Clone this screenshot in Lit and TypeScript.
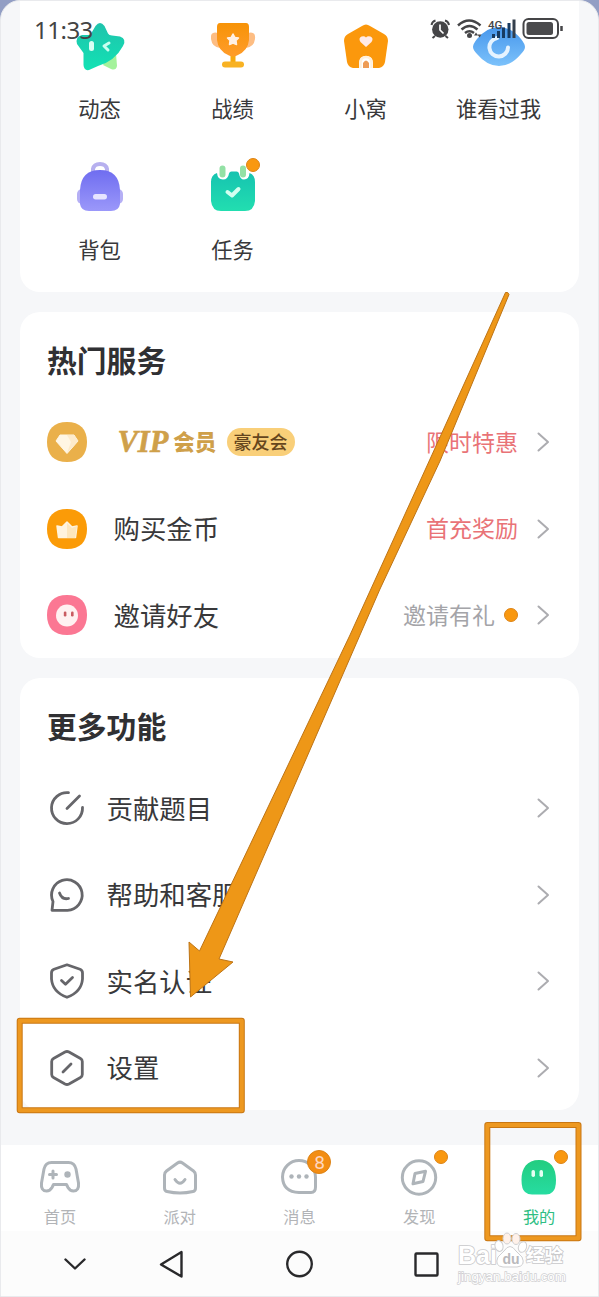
import { LitElement, html, css, svg } from "lit";
import { customElement } from "lit/decorators.js";

const star = html`<svg width="60" height="60" viewBox="0 0 60 60"><defs><linearGradient id="g" x1="0" y1="0" x2="0" y2="1"><stop offset="0" stop-color="#1fc3ac"/><stop offset="1" stop-color="#12e2b4"/></linearGradient></defs>
<path d="M38 38 L46 36 L47 49 Q46 54 41 52 L33 48Z" fill="#a4f29b"/>
<path d="M25.500 9 Q30 3 34.500 9 L38 16.500 Q39 18.500 42 18.500 L50 19.500 Q57 22 53 29 Q45 44 28 49 L19 53 Q14 54 13.500 48 L13.500 36 L7 27 Q5 20 12 18 L18 18 Q21 18 22 15Z" fill="url(#g)"/>
<rect x="19" y="24" width="5" height="10" rx="2.500" fill="#d8fff4"/><path d="M39 26 L34 29 L38 33" fill="none" stroke="#c8fff0" stroke-width="3" stroke-linecap="round" stroke-linejoin="round"/></svg>`;
const trophy = html`<svg width="60" height="60" viewBox="0 0 60 60"><defs><linearGradient id="g" x1="0" y1="0" x2="0" y2="1"><stop offset="0" stop-color="#f79307"/><stop offset="1" stop-color="#ff9c2a"/></linearGradient></defs>
<path d="M15 16 Q7 14 8 22 Q9 30 17 31Z M45 16 Q53 14 52 22 Q51 30 43 31Z" fill="#fdbd83"/>
<path d="M30 38 L30 48" stroke="#f7a90f" stroke-width="5"/><rect x="19" y="44.500" width="22" height="6" rx="3" fill="#f8b223"/>
<path d="M17 6 H43 Q46 6 46 10 V23 Q45 34 34 38.500 Q30 40.500 26 38.500 Q15 34 14 23 V10 Q14 6 17 6Z" fill="url(#g)"/>
<path d="M30 17 L32 20.500 L35.500 21 L33 23.500 L33.500 27.500 L30 26 L26.500 27.500 L27 23.500 L24.500 21 L28 20.500Z" fill="#fff0e4" stroke="#fff0e4" stroke-width="1.500" stroke-linejoin="round"/></svg>`;
const house = html`<svg width="60" height="60" viewBox="0 0 60 60">
<path d="M26 9 Q30 6 34 9 L48 17 Q52 19 52 24 L49 45 Q48 50 43 51 H37 V46 Q37 39 30 39 Q23 39 23 46 V51 H17 Q12 50 11 45 L8 24 Q8 19 12 17Z" fill="#fb980c"/>
<path d="M30 30 L24.500 25 Q22 21 25.500 19.500 Q28.500 18.500 30 20.500 Q31.500 18.500 34.500 19.500 Q38 21 35.500 25Z" fill="#ffeae8"/>
<path d="M24.500 51 V45.500 Q25 40 30 40 Q35 40 35.500 45.500 V51" fill="none" stroke="#fff0dc" stroke-width="2.500"/><path d="M27 51 V46 Q30 41 33 46 V51Z" fill="#ee9c55"/></svg>`;
const eye = html`<svg width="60" height="60" viewBox="0 0 60 60"><defs><linearGradient id="g" x1="0" y1="0" x2="0" y2="1"><stop offset="0" stop-color="#4797ec"/><stop offset="1" stop-color="#7cc2fb"/></linearGradient></defs>
<path d="M4 30 Q4 27 8 22 Q18 10 30 10 Q42 10 52 22 Q56 27 56 30 Q56 33 52 37 Q42 49 30 49 Q18 49 8 37 Q4 33 4 30Z" fill="url(#g)"/>
<path d="M28 21 A9.300 9.300 0 1 0 39 30.500" fill="none" stroke="#e5f3ff" stroke-width="4" stroke-linecap="round"/></svg>`;
const bag = html`<svg width="60" height="60" viewBox="0 0 60 60"><defs><linearGradient id="g" x1="0" y1="0" x2="0" y2="1"><stop offset="0" stop-color="#6f6df0"/><stop offset="1" stop-color="#9b98fa"/></linearGradient></defs>
<path d="M23 15 V11 Q24 6 30 6 Q36 6 37 11 V15" fill="none" stroke="#b7b0ef" stroke-width="4"/><rect x="7" y="31" width="46" height="15" rx="5" fill="#b5aff5"/>
<path d="M10 32 Q11 12 30 12 Q49 12 50 32 V46 Q49 53 41 53 H19 Q11 53 10 46Z" fill="url(#g)"/><rect x="23" y="36" width="14" height="5.500" rx="2.700" fill="#e6e4ff"/></svg>`;
const task = html`<svg width="60" height="60" viewBox="0 0 60 60"><defs><linearGradient id="g" x1="0" y1="0" x2="0" y2="1"><stop offset="0" stop-color="#16c3b0"/><stop offset="1" stop-color="#22deb0"/></linearGradient></defs>
<path d="M14 15 Q14.500 21.500 20 21.500 Q25 21.500 26 15.500 Q26.500 13.500 28.500 13.500 H33.500 Q35.500 13.500 36 15.500 Q37 21.500 41 21.500 Q46 21.500 46.500 15 Q52 17 52 24 V43 Q51 53 42 53 H18 Q9 53 8 43 V24 Q8 17 14 15Z" fill="url(#g)"/>
<rect x="16.500" y="7.500" width="6" height="12" rx="3" fill="#93e1a5"/><rect x="37" y="7.500" width="6" height="12" rx="3" fill="#93e1a5"/>
<path d="M24.500 34 L29 37.500 L35.500 31" fill="none" stroke="#d2fff0" stroke-width="4" stroke-linecap="round" stroke-linejoin="round"/></svg>`;

const squircle = "M20 0 C33 0 40 7 40 20 S33 40 20 40 S0 33 0 20 S7 0 20 0Z";
const gem = html`<svg width="40" height="40" viewBox="0 0 40 40"><path d=${squircle} fill="#eab04a"/><path d="M13 13 H27 L31 19 L20 31.500 L9 19Z" fill="#fff6e4" stroke="#fff6e4" stroke-linejoin="round"/><path d="M20 13 L24 20 L20 31 L31 19 L27 13Z" fill="#fbe5bd" opacity=".6"/></svg>`;
const crown = html`<svg width="40" height="40" viewBox="0 0 40 40"><path d=${squircle} fill="#fb9b07"/><path d="M10 17 L15 18 L20 13 L25 18 L30 17 L28.500 28.500 H11.500Z" fill="#fff3dd" stroke="#fff3dd" stroke-width="1.500" stroke-linejoin="round"/><path d="M20 14 L25 19 L30 17 L28 29 H20Z" fill="#fcd99c" opacity=".5"/></svg>`;
const invite = html`<svg width="40" height="40" viewBox="0 0 40 40"><path d=${squircle} fill="#fb7793"/><circle cx="20" cy="20.500" r="11" fill="#fff1f1"/><rect x="16.800" y="16.500" width="2.600" height="5" rx="1.200" fill="#c95b61"/><rect x="24" y="16.500" width="2.600" height="5" rx="1.200" fill="#c95b61"/></svg>`;

const line = (body: unknown) => html`<svg width="38" height="38" viewBox="0 0 38 38" fill="none" stroke="#66666a" stroke-width="2.800" stroke-linecap="round" stroke-linejoin="round">${body}</svg>`;
const contribute = line(svg`<path d="M20.500 3.700 A15.500 15.500 0 1 0 34.500 18.500 M19 19.500 L31.500 7"/>`);
const help = line(svg`<path d="M4 34.300 L5 25.500 A15.300 15.300 0 1 1 19.500 34.300Z M11.500 17 Q14 24 20.500 22.500"/>`);
const shield = line(svg`<path d="M19 2.800 L32 7.300 Q34.500 8.200 34.500 11 V17 Q33.500 30 19 35.300 Q4.500 30 3.500 17 V11 Q3.500 8.200 6 7.300Z M13.500 18.500 L17.500 22.300 L24.500 15.500"/>`);
const hexagon = line(svg`<path d="M17 3 Q19 2 21 3 L32.500 9.500 Q34.300 10.500 34.300 12.500 V25.500 Q34.300 27.500 32.500 28.500 L21 35 Q19 36 17 35 L5.500 28.500 Q3.700 27.500 3.700 25.500 V12.500 Q3.700 10.500 5.500 9.500Z M15 23 L23 15"/>`);

const tab = (body: unknown) => html`<svg width="46" height="46" viewBox="0 0 46 46" fill="none" stroke="#aeb4b9" stroke-width="3" stroke-linecap="round" stroke-linejoin="round">${body}</svg>`;
const pad = tab(svg`<path d="M14.500 8.500 H31.500 Q37.500 8.500 39 15 L41.500 29 Q42.300 37 36.500 37 Q33 37 31 33.500 L29.500 30.500 H16.500 L15 33.500 Q13 37 9.500 37 Q3.700 37 4.500 29 L7 15 Q8.500 8.500 14.500 8.500Z M16 17 V24 M12.500 20.500 H19.500"/><circle cx="30.500" cy="20.500" r="3.200" fill="#aeb4b9" stroke="none"/>`);
const party = tab(svg`<path d="M20.500 9 Q23 7.300 25.500 9 L36.500 17 Q38.500 18.500 38.500 21 V34 Q38.500 37 36 37.500 Q23 40.500 10 37.500 Q7.500 37 7.500 34 V21 Q7.500 18.500 9.500 17Z M18 25.500 Q23 33 28 25.500"/>`);
const chat = tab(svg`<path d="M23 6.500 A16.500 16.500 0 0 0 6.500 23 Q7 38 23 38.500 H35 Q39.500 38.500 39.500 33 V23 A16.500 16.500 0 0 0 23 6.500Z"/><g fill="#aeb4b9" stroke="none"><circle cx="15.500" cy="22.500" r="2.200"/><circle cx="23" cy="22.500" r="2.200"/><circle cx="30.500" cy="22.500" r="2.200"/></g>`);
const find = tab(svg`<circle cx="23" cy="23.500" r="16.700"/><path d="M19 19.500 L29.500 17.300 L27 27.500 L17 29.800Z"/>`);
const mine = html`<svg width="46" height="46" viewBox="0 0 46 46"><defs><linearGradient id="g" x1="0" y1="0" x2="0" y2="1"><stop offset="0" stop-color="#22cd80"/><stop offset="1" stop-color="#27dca1"/></linearGradient></defs><path d="M23 6 C35 6 40 14 40 26 Q40 35 36.500 38 Q34 40.500 30 40.500 H16 Q12 40.500 9 38 Q5.500 35 5.500 26 C5.500 14 11 6 23 6Z" fill="url(#g)"/><rect x="15.500" y="16" width="3.500" height="7" rx="1.700" fill="#e5fff3"/><rect x="23.500" y="16" width="3.500" height="7" rx="1.700" fill="#e5fff3"/></svg>`;

const chevron = html`<svg class="chev" width="14" height="22" viewBox="0 0 14 22" fill="none" stroke="#acacb0" stroke-width="2" stroke-linecap="round" stroke-linejoin="round"><path d="M2.500 2.500 L12 11 L2.500 19.500"/></svg>`;

// Each glyph lives in its own shadow root, so gradient ids stay local to it.
@customElement("ui-glyph")
class UiGlyph extends LitElement {
  static properties = { art: { attribute: false } };
  declare art: unknown;
  static styles = css`:host{display:block;flex:none}svg{display:block}`;
  render() { return html`${this.art}`; }
}

@customElement("app-root")
class AppRoot extends LitElement {
  static styles = css`
    :host{display:block;position:relative;width:599px;height:1297px;overflow:hidden;background:linear-gradient(#929ec4,#c7cbdc);font-family:Roboto,"Noto Sans CJK SC",sans-serif;color:#38383a}
    *{box-sizing:border-box}
    svg{display:block}
    .phone{width:599px;height:1297px;background:#f6f7f9;border:1px solid #e9eaed;border-radius:20px 20px 0 0;overflow:hidden;display:flex;flex-direction:column}
    .scroll{height:1144px;padding:0 19px;display:flex;flex-direction:column;gap:20px}
    .card{background:#fff;border-radius:20px;flex:none}
    .shortcuts{height:291px;border-radius:0 0 20px 20px;padding:16px 13px 0;display:grid;grid-template-columns:repeat(4,133px);grid-auto-rows:141px}
    .short{display:flex;flex-direction:column;align-items:center;font-size:21.300px}
    .short span{height:30px;line-height:30px;margin-top:18px}
    .iconbox{position:relative}
    .dot{width:14px;height:14px;border-radius:50%;background:#f99810;border:1px solid #dd8417;flex:none}
    .iconbox .dot{position:absolute;right:3px;top:0}
    .services{height:346px;padding-top:25px}
    .more{height:432px;padding-top:25px}
    h2{margin:0 0 12px 27px;height:50px;line-height:50px;font-size:29.800px;font-weight:700;color:#303033}
    .row{height:86.500px;padding:0 29px 0 26.500px;display:flex;align-items:center}
    .more .row{padding-left:27.500px}
    .row .label{font-size:26.400px;line-height:40px;margin:3px 0 0 27px}
    .more .row .label{margin-left:21px}
    .row .end{margin-left:auto;font-size:23px;line-height:34px;color:#a4a4a8;display:flex;align-items:center}
    .end span{padding-top:3px}
    .end .hot{color:#e97377}
    .end .dot{margin-left:9px}
    .chev{margin-left:18px}
    .vip{margin-left:31px;display:flex;align-items:center;color:#cfa04a;gap:5px;width:98px}
    .vip i{font:italic 700 30.500px/32px "Liberation Serif","Noto Sans CJK SC",serif;-webkit-text-stroke:.6px #cfa04a}
    .vip b{font-size:21.500px;font-weight:900;line-height:32px;padding-top:2px;white-space:nowrap}
    .pill{margin-left:11px;background:#f9cf79;border-radius:15px;width:68px;height:28px;line-height:29px;text-align:center;font-size:18px;font-weight:500;color:#65451d}
    .tabs{height:86px;margin:0 -1px;background:#fff;display:flex;flex:none}
    .tab{width:119.800px;flex:none;display:flex;flex-direction:column;align-items:center;font-size:16.200px;color:#b2b4b7;padding-top:9px}
    .tab span{line-height:24px;margin-top:6px}
    .tab.on{color:#2ebe83}
    .tab .dot{right:-6px;top:-4px}
    .count{position:absolute;left:31px;top:-4px;width:24px;height:24px;border-radius:50%;background:#f38d13;border:1px solid #dd8417;color:#ffd6c0;text-align:center;line-height:23px;font-size:19px}
    .nav{flex:1;background:#fcfcfc;display:flex;align-items:center}
    .status{position:absolute;left:0;top:0;width:599px;height:60px;display:flex;align-items:center;padding-left:34px}
    .clock{font-family:"Noto Sans",sans-serif;font-size:24px;line-height:28px;letter-spacing:-.500px;color:#444}
    .art{position:absolute;left:0;top:0}
    .mark{position:absolute;right:32px;top:1241px;width:109px;height:44px;color:#fff;font-family:"Liberation Sans","Noto Sans CJK SC",sans-serif;-webkit-text-stroke:1.600px #c9c9cb;paint-order:stroke fill}
    .brand{display:flex;height:29px;align-items:center;font-size:25px;font-weight:700;line-height:29px;white-space:nowrap}
    .paw{width:29px;flex:none}
    .brand .cn{font-size:18.500px}
    .site{font-size:13.400px;line-height:13px;white-space:nowrap;-webkit-text-stroke:1.400px #cfcfd1}
  `;
  render() {
    const shorts = [["动态", star], ["战绩", trophy], ["小窝", house], ["谁看过我", eye], ["背包", bag], ["任务", task]];
    const more = [["贡献题目", contribute], ["帮助和客服", help], ["实名认证", shield], ["设置", hexagon]];
    const tabs = [["首页", pad], ["派对", party], ["消息", chat], ["发现", find], ["我的", mine]];
    return html`
    <div class="phone">
      <div class="scroll">
        <section class="card shortcuts">${shorts.map(([t, a], i) => html`<div class="short"><div class="iconbox"><ui-glyph .art=${a}></ui-glyph>${i === 5 ? html`<div class="dot"></div>` : ""}</div><span>${t}</span></div>`)}</section>
        <section class="card services"><h2>热门服务</h2>
          <div class="row"><ui-glyph .art=${gem}></ui-glyph><div class="vip"><i>VIP</i><b>会员</b></div><span class="pill">豪友会</span><div class="end"><span class="hot">限时特惠</span>${chevron}</div></div>
          <div class="row"><ui-glyph .art=${crown}></ui-glyph><span class="label">购买金币</span><div class="end"><span class="hot">首充奖励</span>${chevron}</div></div>
          <div class="row"><ui-glyph .art=${invite}></ui-glyph><span class="label">邀请好友</span><div class="end"><span>邀请有礼</span><div class="dot"></div>${chevron}</div></div>
        </section>
        <section class="card more"><h2>更多功能</h2>
          ${more.map(([t, a]) => html`<div class="row"><ui-glyph .art=${a}></ui-glyph><span class="label">${t}</span><div class="end">${chevron}</div></div>`)}
        </section>
      </div>
      <nav class="tabs">${tabs.map(([t, a], i) => html`<div class="tab ${i === 4 ? "on" : ""}"><div class="iconbox"><ui-glyph .art=${a}></ui-glyph>${i === 2 ? html`<div class="count">8</div>` : i > 2 ? html`<div class="dot"></div>` : ""}</div><span>${t}</span></div>`)}</nav>
      <div class="nav"><svg width="597" height="65" viewBox="1 1231 597 65" fill="none" stroke="#29292b" stroke-width="2.400" stroke-linecap="round" stroke-linejoin="round"><path d="M65.500 1259.500 L75 1268.500 L84.500 1259.500 M181.500 1252 V1276.500 L161 1264.500Z"/><circle cx="299.500" cy="1264" r="12.300"/><rect x="415.500" y="1253.500" width="22" height="22" rx="1"/></svg></div>
    </div>
    <div class="status"><span class="clock">11:33</span></div>
    <svg class="art" width="599" height="60" viewBox="0 0 599 60">
      <circle cx="440.300" cy="29.500" r="8.200" fill="#454547"/><path d="M440 24.500 V30 L443.500 33.500" stroke="#fff" stroke-width="1.700" fill="none"/><path d="M431.500 25 Q432 21.500 435.500 20.500 M445 20.500 Q448.500 21.500 449 25 M435 36 L432.500 38 M445.500 36 L448 38" stroke="#454547" stroke-width="2" fill="none"/>
      <g fill="none" stroke="#454547" stroke-width="2.500"><path d="M458 25.500 Q469 15.500 480.500 25.500 M461.500 29.500 Q469.500 22.500 477.500 29.500 M465 33 Q469.500 29.500 474 33"/></g><circle cx="469.500" cy="35.500" r="2.500" fill="#454547"/><path d="M474 35.500 L476 32.500 L478 35.500Z M477.500 34.500 L479.500 37.500 L481.500 34.500Z" fill="#454547"/>
      <g fill="#173b62"><rect x="492" y="34" width="3" height="4"/><rect x="497" y="31" width="3" height="7"/><rect x="502" y="27.500" width="3" height="10.500"/><rect x="507.500" y="23" width="3" height="15"/><rect x="512.500" y="19.500" width="3" height="18.500" fill="#343f4c"/></g>
      <text x="488" y="28.500" font-family="Roboto" font-size="11.500" font-weight="500" fill="#454547">4G</text>
      <rect x="523.500" y="19" width="34.500" height="19" rx="5" fill="none" stroke="#454547" stroke-width="2"/><rect x="526.500" y="22" width="26.500" height="13" rx="2.500" fill="#4a4a4c"/><path d="M561.500 26 V31" stroke="#454547" stroke-width="2.500"/>
    </svg>
    <svg class="art" width="599" height="1297" viewBox="0 0 599 1297" fill="none">
      <path d="M505.500 292.500 Q508 291.500 509 294.500 L440 461 L380 589 L219 959 L233 962 L190.500 997 L189 942 L199.500 951 L350 635 L431 457Z" fill="#ee9717" stroke="#bd7416" stroke-width="1"/>
      <g stroke-linejoin="round"><rect x="19.700" y="1020.800" width="222.100" height="89.500" stroke="#c97713" stroke-width="6"/><rect x="19.700" y="1020.800" width="222.100" height="89.500" stroke="#ed9820" stroke-width="4"/><rect x="487.300" y="1125" width="91.200" height="113.300" stroke="#c97713" stroke-width="6"/><rect x="487.300" y="1125" width="91.200" height="113.300" stroke="#ed9820" stroke-width="4"/></g>
    </svg>
    <div class="mark"><div class="brand"><span>Bai</span><span class="paw"></span><span class="cn">经验</span></div><div class="site">jingyan.baidu.com</div></div>
    <svg class="art" width="599" height="1297" viewBox="0 0 599 1297"><g fill="#fff" stroke="#cfcfd1" stroke-width="1"><ellipse cx="499" cy="1246" rx="4" ry="5.500" transform="rotate(-15 499 1246)"/><ellipse cx="507" cy="1238.500" rx="4" ry="5.500" fill="#fff1e9"/><ellipse cx="516" cy="1239" rx="4" ry="5.500" fill="#fff1e9"/><ellipse cx="522.500" cy="1247" rx="4" ry="5.500" transform="rotate(20 522.500 1247)"/><path d="M504 1251 Q510 1242 516 1251 L522 1257 Q526 1266 517 1267 H503 Q494 1266 498 1257Z"/></g><text x="502.500" y="1263.500" font-family="Liberation Sans" font-size="14" font-weight="700" fill="#b9b9bc">du</text></svg>`;
  }
}
